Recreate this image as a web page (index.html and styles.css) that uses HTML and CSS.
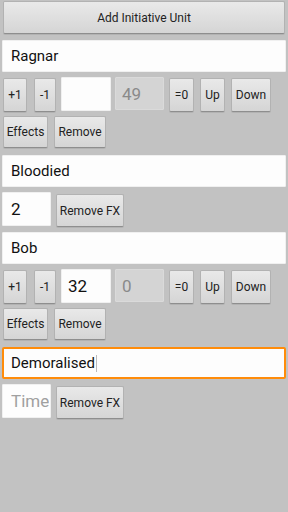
FILE: index.html
```html
<!DOCTYPE html>
<html lang="en">
  <head>
    <meta charset="UTF-8" />
    <meta name="viewport" content="width=device-width, initial-scale=1.0" />
    <title>Initiative</title>
    <link rel="stylesheet" href="styles.css">
  </head>
  <body>
    <button class="btn add-btn">Add Initiative Unit</button>

    <div class="unit">
      <input class="field name-field" type="text" value="Ragnar" />
      <div class="unit-row">
        <button class="btn btn-plus">+1</button>
        <button class="btn btn-minus">-1</button>
        <input class="field num-field" type="text" value="" />
        <input class="field num-field disabled" type="text" value="49" disabled />
        <button class="btn btn-zero">=0</button>
        <button class="btn btn-up">Up</button>
        <button class="btn btn-down">Down</button>
      </div>
      <div class="unit-row actions">
        <button class="btn btn-effects">Effects</button>
        <button class="btn btn-remove">Remove</button>
      </div>
    </div>

    <div class="effect">
      <input class="field name-field" type="text" value="Bloodied" />
      <div class="effect-row">
        <input class="field time-field" type="text" value="2" />
        <button class="btn btn-removefx">Remove FX</button>
      </div>
    </div>

    <div class="unit">
      <input class="field name-field" type="text" value="Bob" />
      <div class="unit-row">
        <button class="btn btn-plus">+1</button>
        <button class="btn btn-minus">-1</button>
        <input class="field num-field" type="text" value="32" />
        <input class="field num-field disabled" type="text" value="0" disabled />
        <button class="btn btn-zero">=0</button>
        <button class="btn btn-up">Up</button>
        <button class="btn btn-down">Down</button>
      </div>
      <div class="unit-row actions">
        <button class="btn btn-effects">Effects</button>
        <button class="btn btn-remove">Remove</button>
      </div>
    </div>

    <div class="effect">
      <div class="field name-field focused">Demoralised<span class="caret"></span></div>
      <div class="effect-row">
        <input class="field time-field" type="text" placeholder="Time" />
        <button class="btn btn-removefx">Remove FX</button>
      </div>
    </div>
  </body>
</html>
```

FILE: styles.css
```css
body {
  margin: 0;
  padding: 0;
  background-color: #c2c2c2;
  font-family: Roboto, "Noto Sans", sans-serif;
  width: 288px;
  height: 512px;
  overflow: hidden;
}
.btn {
  display: block;
  box-sizing: border-box;
  margin: 0;
  padding: 0;
  font-family: Roboto, "Noto Sans", sans-serif;
  font-size: 12px;
  color: #222;
  background: linear-gradient(#e9e9e9, #d5d5d5);
  border: 1px solid #b2b2b2;
  border-bottom-color: #8e8e8e;
  border-radius: 2px;
  box-shadow: 0 1px 0 rgba(0, 0, 0, 0.08);
  text-align: center;
}
.add-btn {
  width: 282px;
  height: 33px;
  margin: 1px 0 0 3px;
}
.field {
  display: block;
  box-sizing: border-box;
  margin: 0;
  padding: 0 8px;
  font-family: Roboto, "Noto Sans", sans-serif;
  font-size: 16px;
  color: #111;
  background: #fdfdfd;
  border: 1px solid #f0f0f0;
  border-radius: 1px;
  outline: none;
}
.field::placeholder {
  color: #a0a0a0;
}
.name-field {
  width: 284px;
  height: 32px;
  margin-left: 2px;
  font-size: 15px;
}
.unit {
  padding-top: 6px;
}
.unit-row {
  display: flex;
  align-items: flex-start;
  margin-top: 5px;
  margin-left: 3px;
  height: 35px;
}
.unit-row .btn {
  height: 34px;
  margin-top: 1px;
}
.num-field {
  width: 50px;
  height: 34px;
  padding: 0 6px;
  font-size: 17px;
}
.num-field.disabled {
  width: 49px;
  height: 33px;
  color: #8a8a8a;
  background: #d4d4d4;
  border-color: #dadada;
  margin-left: 4px;
}
.btn-plus { width: 24px; }
.btn-minus { width: 22px; margin-left: 7px; margin-right: 5px; }
.btn-zero { width: 25px; margin-left: 5px; }
.btn-up { width: 25px; margin-left: 6px; }
.btn-down { width: 40px; margin-left: 6px; }
.unit-row.actions {
  margin-top: 4px;
  height: 33px;
}
.unit-row.actions .btn {
  height: 32px;
  margin-top: 0;
}
.btn-effects { width: 45px; }
.btn-remove { width: 52px; margin-left: 6px; }
.effect {
  padding-top: 6px;
}
.effect-row {
  display: flex;
  align-items: flex-start;
  margin-top: 5px;
  margin-left: 2px;
  height: 34px;
}
.time-field {
  width: 49px;
  height: 34px;
  padding: 0 1px 0 8px;
  font-size: 17px;
}
.btn-removefx {
  flex-shrink: 0;
  width: 68px;
  height: 33px;
  margin-top: 2px;
  margin-left: 5px;
}
.focused {
  display: flex;
  align-items: center;
  border: 2px solid #ff8c0a;
  border-radius: 2px;
  padding: 0 7px;
}
.caret {
  display: inline-block;
  width: 1px;
  height: 17px;
  margin-left: 1px;
  background: #bbb;
}
```
